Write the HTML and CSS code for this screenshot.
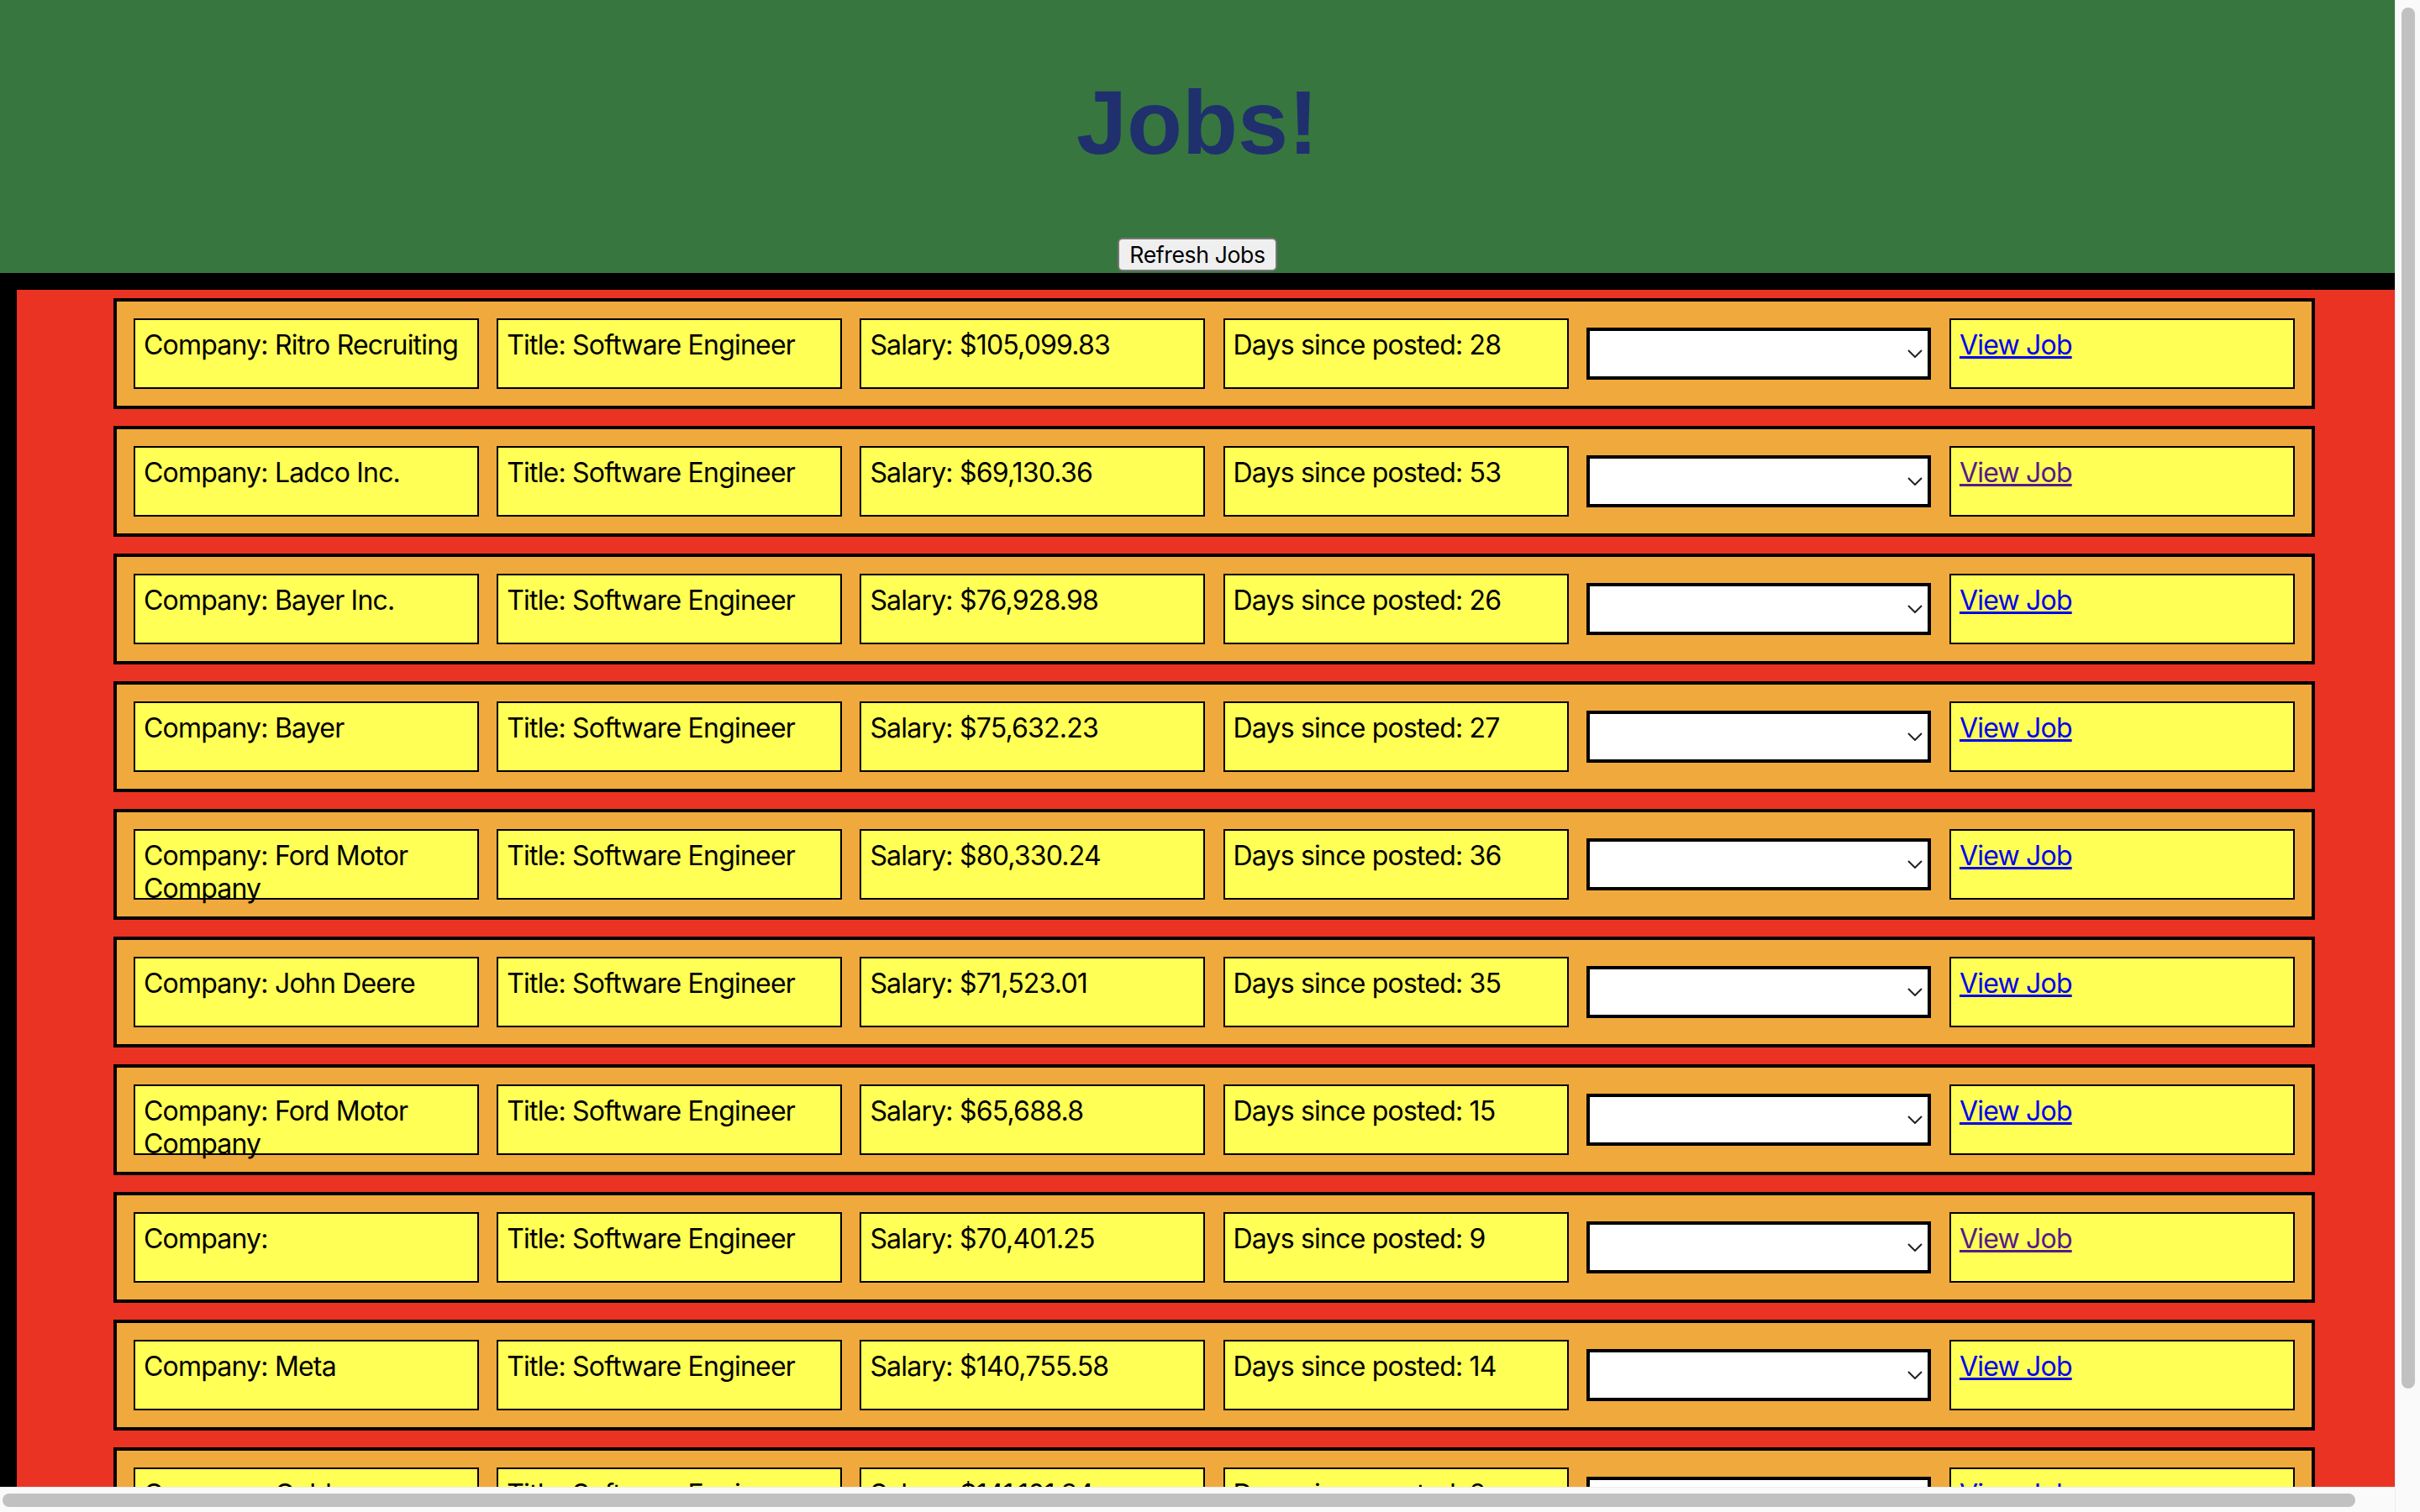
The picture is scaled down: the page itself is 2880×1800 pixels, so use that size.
FILE: index.html
```html
<!DOCTYPE html>
<html lang="en">
<head>
<meta charset="utf-8">
<title>Jobs!</title>
<link rel="stylesheet" href="styles.css">
</head>
<body>
<header class="top">
  <h1 class="title">Jobs!</h1>
  <button class="refresh" type="button">Refresh Jobs</button>
</header>
<main class="board">
  <div class="job">
    <div class="cell">Company: Ritro Recruiting</div>
    <div class="cell">Title: Software Engineer</div>
    <div class="cell">Salary: $105,099.83</div>
    <div class="cell">Days since posted: 28</div>
    <div class="pick"><select class="status"><option></option></select><svg class="chev" viewBox="0 0 18 10"><path d="M1 1 L9 9 L17 1"/></svg></div>
    <div class="cell"><a class="link" href="#job1">View Job</a></div>
  </div>
  <div class="job">
    <div class="cell">Company: Ladco Inc.</div>
    <div class="cell">Title: Software Engineer</div>
    <div class="cell">Salary: $69,130.36</div>
    <div class="cell">Days since posted: 53</div>
    <div class="pick"><select class="status"><option></option></select><svg class="chev" viewBox="0 0 18 10"><path d="M1 1 L9 9 L17 1"/></svg></div>
    <div class="cell"><a class="link visited" href="#job2">View Job</a></div>
  </div>
  <div class="job">
    <div class="cell">Company: Bayer Inc.</div>
    <div class="cell">Title: Software Engineer</div>
    <div class="cell">Salary: $76,928.98</div>
    <div class="cell">Days since posted: 26</div>
    <div class="pick"><select class="status"><option></option></select><svg class="chev" viewBox="0 0 18 10"><path d="M1 1 L9 9 L17 1"/></svg></div>
    <div class="cell"><a class="link" href="#job3">View Job</a></div>
  </div>
  <div class="job">
    <div class="cell">Company: Bayer</div>
    <div class="cell">Title: Software Engineer</div>
    <div class="cell">Salary: $75,632.23</div>
    <div class="cell">Days since posted: 27</div>
    <div class="pick"><select class="status"><option></option></select><svg class="chev" viewBox="0 0 18 10"><path d="M1 1 L9 9 L17 1"/></svg></div>
    <div class="cell"><a class="link" href="#job4">View Job</a></div>
  </div>
  <div class="job">
    <div class="cell">Company: Ford Motor Company</div>
    <div class="cell">Title: Software Engineer</div>
    <div class="cell">Salary: $80,330.24</div>
    <div class="cell">Days since posted: 36</div>
    <div class="pick"><select class="status"><option></option></select><svg class="chev" viewBox="0 0 18 10"><path d="M1 1 L9 9 L17 1"/></svg></div>
    <div class="cell"><a class="link" href="#job5">View Job</a></div>
  </div>
  <div class="job">
    <div class="cell">Company: John Deere</div>
    <div class="cell">Title: Software Engineer</div>
    <div class="cell">Salary: $71,523.01</div>
    <div class="cell">Days since posted: 35</div>
    <div class="pick"><select class="status"><option></option></select><svg class="chev" viewBox="0 0 18 10"><path d="M1 1 L9 9 L17 1"/></svg></div>
    <div class="cell"><a class="link" href="#job6">View Job</a></div>
  </div>
  <div class="job">
    <div class="cell">Company: Ford Motor Company</div>
    <div class="cell">Title: Software Engineer</div>
    <div class="cell">Salary: $65,688.8</div>
    <div class="cell">Days since posted: 15</div>
    <div class="pick"><select class="status"><option></option></select><svg class="chev" viewBox="0 0 18 10"><path d="M1 1 L9 9 L17 1"/></svg></div>
    <div class="cell"><a class="link" href="#job7">View Job</a></div>
  </div>
  <div class="job">
    <div class="cell">Company: </div>
    <div class="cell">Title: Software Engineer</div>
    <div class="cell">Salary: $70,401.25</div>
    <div class="cell">Days since posted: 9</div>
    <div class="pick"><select class="status"><option></option></select><svg class="chev" viewBox="0 0 18 10"><path d="M1 1 L9 9 L17 1"/></svg></div>
    <div class="cell"><a class="link visited" href="#job8">View Job</a></div>
  </div>
  <div class="job">
    <div class="cell">Company: Meta</div>
    <div class="cell">Title: Software Engineer</div>
    <div class="cell">Salary: $140,755.58</div>
    <div class="cell">Days since posted: 14</div>
    <div class="pick"><select class="status"><option></option></select><svg class="chev" viewBox="0 0 18 10"><path d="M1 1 L9 9 L17 1"/></svg></div>
    <div class="cell"><a class="link" href="#job9">View Job</a></div>
  </div>
  <div class="job">
    <div class="cell">Company: Goldman</div>
    <div class="cell">Title: Software Engineer</div>
    <div class="cell">Salary: $141,101.34</div>
    <div class="cell">Days since posted: 8</div>
    <div class="pick"><select class="status"><option></option></select><svg class="chev" viewBox="0 0 18 10"><path d="M1 1 L9 9 L17 1"/></svg></div>
    <div class="cell"><a class="link" href="#job10">View Job</a></div>
  </div>
</main>
<div class="vscroll"><div class="vthumb"></div></div>
<div class="hscroll"><div class="hthumb"></div></div>
</body>
</html>
```
FILE: styles.css
```css
html {
  background: #000;
}

body {
  width: calc(100vw - 30px);
  margin: 0;
  background: #000;
  font-family: Inter, "Liberation Sans", sans-serif;
  font-size: 32px;
  letter-spacing: -0.8px;
  color: #000;
}

.top {
  box-sizing: border-box;
  height: 325px;
  padding-top: 90px;
  background: #37763f;
  display: flex;
  flex-direction: column;
  align-items: center;
}

.title {
  margin: 0;
  font-family: "Liberation Sans", Arial, sans-serif;
  font-weight: 700;
  font-size: 108px;
  line-height: 112px;
  letter-spacing: 0;
  color: #1f306d;
}

.refresh {
  margin-top: auto;
  margin-bottom: 2px;
  height: 40px;
  padding: 0 12px;
  font-family: Inter, "Liberation Sans", sans-serif;
  font-size: 26.67px;
  letter-spacing: -0.4px;
  color: #000;
  background: #efefef;
  border: 2px solid #767676;
  border-radius: 6px;
}

.board {
  width: 100%;
  border: 20px solid #000;
  background: #ea3323;
  padding: 10px 0 10px;
  display: flex;
  flex-direction: column;
  align-items: center;
  gap: 20px;
}

.job {
  box-sizing: border-box;
  width: 2620px;
  height: 132px;
  padding: 0 20px;
  border: 4px solid #000;
  background: #f0a93c;
  display: flex;
  align-items: center;
  justify-content: space-between;
}

.cell {
  box-sizing: border-box;
  width: 411px;
  height: 84px;
  padding: 10px;
  border: 2px solid #000;
  background: #ffff55;
  line-height: normal;
}

.pick {
  position: relative;
  width: 411px;
  height: 62px;
}

.status {
  box-sizing: border-box;
  width: 410px;
  height: 62px;
  margin: 0;
  border: 4px solid #000;
  border-radius: 0;
  background: #fff;
  appearance: none;
  -webkit-appearance: none;
}

.chev {
  position: absolute;
  right: 11px;
  top: 26px;
  width: 18px;
  height: 10px;
  fill: none;
  stroke: #222;
  stroke-width: 2;
  pointer-events: none;
}

.link {
  color: #0000ee;
  text-decoration: underline;
}

.link.visited {
  color: #551a8b;
}

/* overlay scrollbars (page overflows both ways) */
.vscroll {
  position: fixed;
  top: 0;
  right: 0;
  width: 30px;
  height: 100vh;
  box-sizing: border-box;
  background: #fafafa;
  border-left: 1px solid #ececec;
}

.vthumb {
  margin: 9px 0 0 7px;
  width: 16px;
  height: 1644px;
  border-radius: 8px;
  background: #c1c1c1;
}

.hscroll {
  position: fixed;
  left: 0;
  bottom: 0;
  width: calc(100vw - 30px);
  height: 30px;
  box-sizing: border-box;
  background: #fafafa;
  border-top: 1px solid #ececec;
}

.hthumb {
  margin: 7px 0 0 3px;
  width: 2800px;
  height: 16px;
  border-radius: 8px;
  background: #c1c1c1;
}
```
